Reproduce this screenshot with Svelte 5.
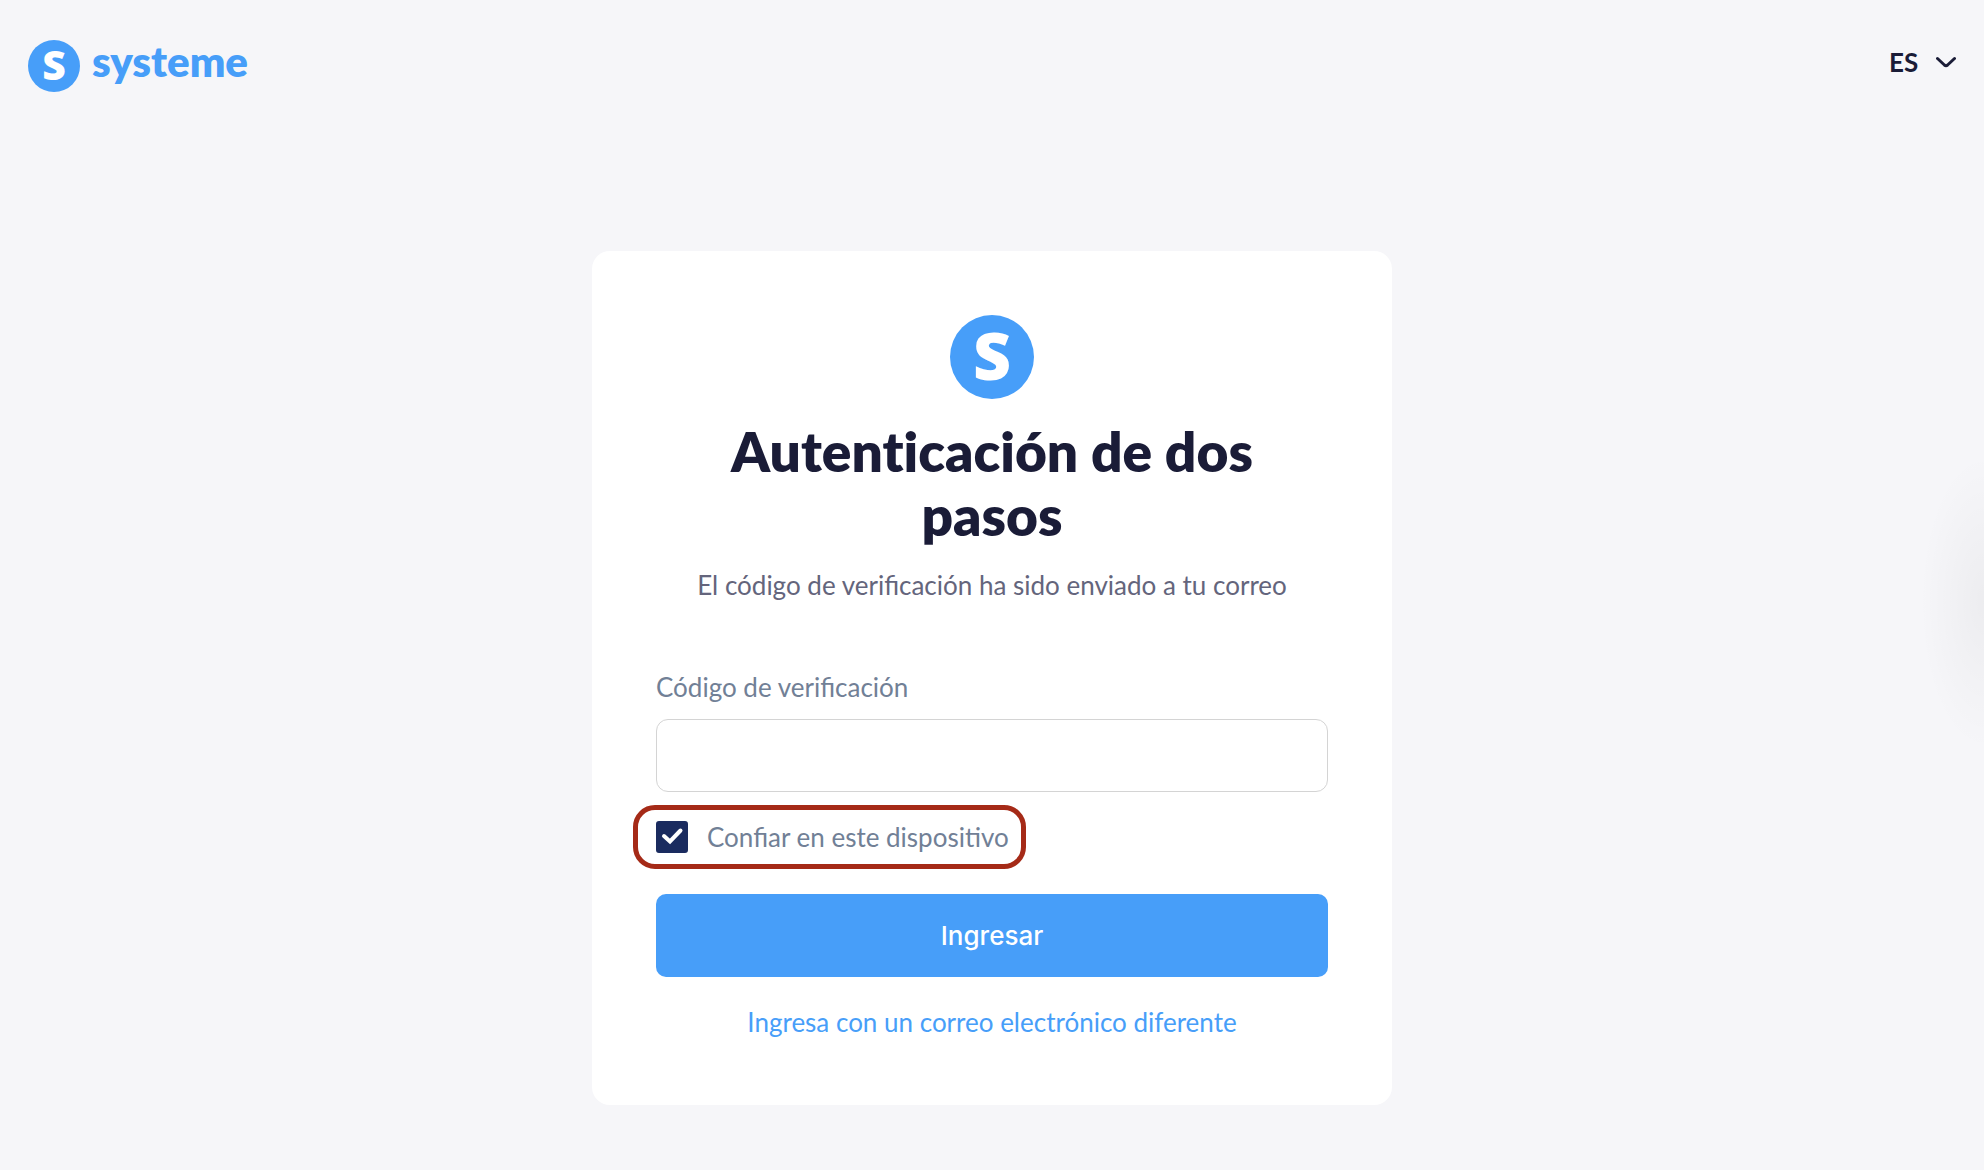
<script lang="ts">
	let code = $state('')
	let trusted = $state(true)
	let language = $state('es')

	function handleSubmit(e: SubmitEvent) {
		e.preventDefault()
	}
</script>

{#snippet badge()}
	<svg class="badge" viewBox="0 0 84 84" aria-hidden="true">
		<circle cx="42" cy="42" r="42" />
		<text x="42" y="65" text-anchor="middle">S</text>
	</svg>
{/snippet}

<div class="page">
	<header>
		<a class="brand" href="/" aria-label="systeme">
			{@render badge()}
			<span>systeme</span>
		</a>
		<div class="language">
			<select bind:value={language} aria-label="Idioma">
				<option value="es">ES</option>
				<option value="en">EN</option>
				<option value="fr">FR</option>
			</select>
			<svg viewBox="0 0 20 12" aria-hidden="true">
				<path d="M1.5 2.5 L8.4 9 Q10 10.4 11.6 9 L18.5 2.5" />
			</svg>
		</div>
	</header>

	<main>
		{@render badge()}
		<h1>Autenticación de dos pasos</h1>
		<p>El código de verificación ha sido enviado a tu correo</p>

		<form onsubmit={handleSubmit}>
			<label class="code-label" for="code">Código de verificación</label>
			<input id="code" class="code" type="text" autocomplete="one-time-code" bind:value={code} />

			<label class="trust">
				<input type="checkbox" bind:checked={trusted} />
				<span>Confiar en este dispositivo</span>
				<svg viewBox="0 0 32 32" aria-hidden="true">
					<path d="M8 15 L14 20.5 L24.5 9.5" />
				</svg>
			</label>

			<button type="submit">Ingresar</button>
		</form>

		<a class="other" href="/login">Ingresa con un correo electrónico diferente</a>
	</main>

	<div class="edge-glow"></div>
</div>

<style>
	:global(body) {
		margin: 0;
		background: #f6f6f9;
	}

	.page {
		position: relative;
		box-sizing: border-box;
		min-height: 100vh;
		overflow: hidden;
		background: #f6f6f9;
		font-family: Lato, 'Open Sans', sans-serif;
		font-size: 26px;
		line-height: 32px;
		color: #1a1c37;
	}

	header {
		display: flex;
		align-items: center;
		justify-content: space-between;
		height: 52px;
		padding: 40px 28px 0;
	}

	.badge {
		display: block;
		width: 84px;
		height: 84px;
		flex: none;
		overflow: visible;
	}

	.badge circle {
		fill: #479ef9;
	}

	.badge text {
		fill: #fff;
		font-family: 'Open Sans', 'Noto Sans', sans-serif;
		font-size: 66px;
		font-weight: 800;
	}

	.brand {
		display: flex;
		align-items: center;
		gap: 12px;
		color: #479ef9;
		font-size: 42px;
		font-weight: 800;
		text-decoration: none;
	}

	.brand span {
		padding-bottom: 10px;
	}

	.brand .badge {
		width: 52px;
		height: 52px;
	}

	.language {
		display: flex;
		align-items: center;
		gap: 12px;
		padding-bottom: 8px;
	}

	.language select {
		appearance: none;
		margin: 0;
		padding: 0;
		border: 0;
		background: none;
		color: inherit;
		font: inherit;
		font-weight: 700;
		cursor: pointer;
	}

	.language svg {
		width: 20px;
		height: 12px;
	}

	.language path {
		fill: none;
		stroke: #1a1c37;
		stroke-width: 3;
		stroke-linecap: round;
	}

	main {
		box-sizing: border-box;
		width: 100%;
		max-width: 800px;
		margin: 159px auto 64px;
		padding: 64px 64px 67px;
		border-radius: 18px;
		background: #fff;
		display: flex;
		flex-direction: column;
		align-items: center;
	}

	h1 {
		margin: 20px 0 0;
		padding: 0 64px;
		font-size: 55px;
		font-weight: 800;
		font-variant-ligatures: none;
		line-height: 64px;
		text-align: center;
	}

	p {
		margin: 22px 0 0;
		color: #64657c;
		text-align: center;
	}

	form {
		display: flex;
		flex-direction: column;
		align-self: stretch;
		margin-top: 70px;
	}

	.code-label,
	.trust {
		color: #718096;
	}

	.code {
		box-sizing: border-box;
		height: 73px;
		margin-top: 16px;
		padding: 0 20px;
		border: 1px solid #d4d4d4;
		border-radius: 12px;
		background: #fff;
		color: inherit;
		font: inherit;
	}

	/* the outline hangs out of the column so that the box lines up with the field */
	.trust {
		position: relative;
		display: flex;
		align-items: center;
		align-self: flex-start;
		gap: 19px;
		margin: 13px 0 25px -23px;
		padding: 11px 12px 11px 18px;
		border: 5px solid #a52a17;
		border-radius: 22px;
		cursor: pointer;
	}

	.trust input {
		appearance: none;
		width: 32px;
		height: 32px;
		margin: 0;
		border: 2px solid #1a2b5f;
		border-radius: 3px;
		background: #fff;
	}

	.trust input:checked {
		background: #1a2b5f;
	}

	.trust svg {
		position: absolute;
		left: 18px;
		top: 11px;
		width: 32px;
		height: 32px;
		pointer-events: none;
	}

	.trust path {
		fill: none;
		stroke: #fff;
		stroke-width: 4;
		stroke-linecap: round;
	}

	button {
		height: 83px;
		border: 0;
		border-radius: 10px;
		background: #479ef9;
		color: #fff;
		font-family: Inter, sans-serif;
		font-size: 26px;
		font-weight: 500;
		cursor: pointer;
	}

	.other {
		margin-top: 29px;
		color: #479ef9;
		text-decoration: none;
	}

	.edge-glow {
		position: absolute;
		top: 454px;
		right: -64px;
		width: 128px;
		height: 296px;
		background: radial-gradient(closest-side, rgba(0, 0, 0, 0.04), rgba(0, 0, 0, 0));
		pointer-events: none;
	}
</style>
